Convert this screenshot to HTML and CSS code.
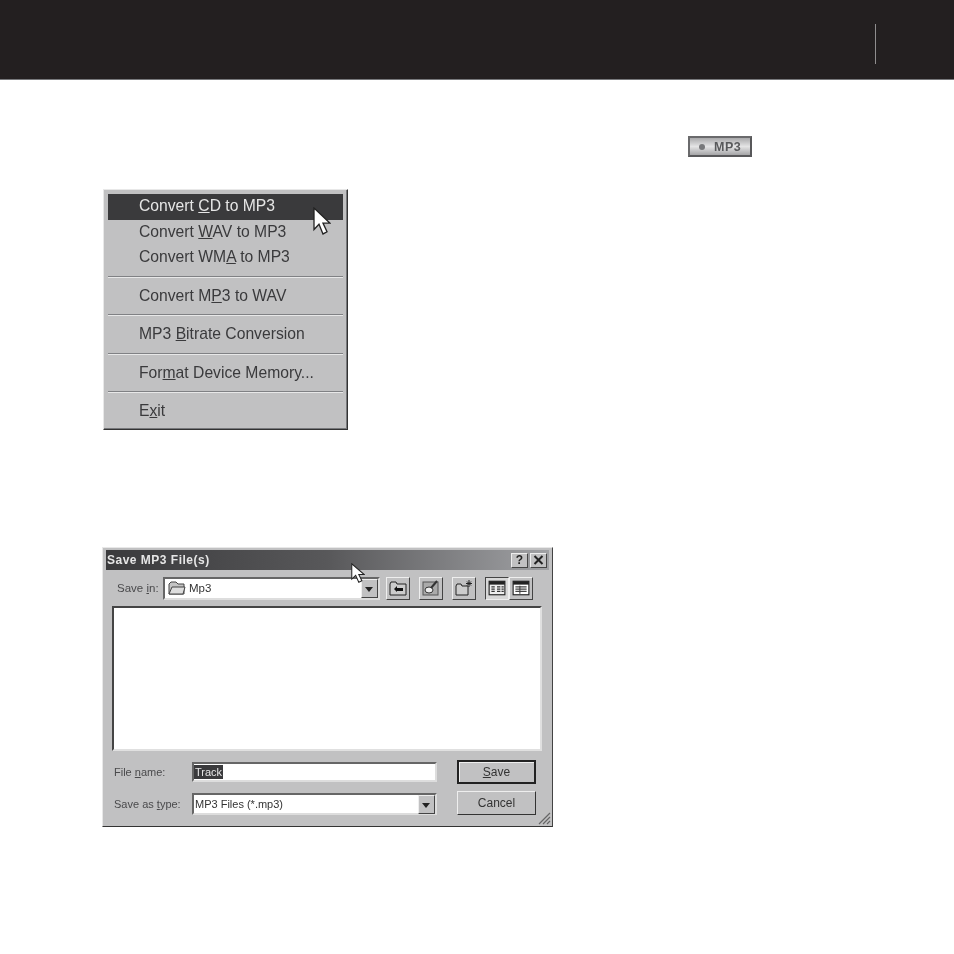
FILE: index.html
```html
<!DOCTYPE html>
<html lang="en">
<head>
<meta charset="utf-8">
<title>MP3 conversion</title>
<link rel="stylesheet" href="styles.css">
</head>
<body>
<header class="banner"><span class="banner-rule"></span></header>
<main class="page">
  <div class="badge-row">
    <div class="mp3-badge"><span class="led"></span><span>MP3</span></div>
  </div>

  <div class="menu">
    <div class="menu-item active">Convert <u>C</u>D to MP3</div>
    <div class="menu-item">Convert <u>W</u>AV to MP3</div>
    <div class="menu-item">Convert WM<u>A</u> to MP3</div>
    <div class="menu-sep"></div>
    <div class="menu-item">Convert M<u>P</u>3 to WAV</div>
    <div class="menu-sep"></div>
    <div class="menu-item">MP3 <u>B</u>itrate Conversion</div>
    <div class="menu-sep"></div>
    <div class="menu-item">For<u>m</u>at Device Memory...</div>
    <div class="menu-sep"></div>
    <div class="menu-item">E<u>x</u>it</div>
    <svg class="cursor menu-cursor" viewBox="0 0 18 26" preserveAspectRatio="none"><path d="M1 1v20l5-5 4 9 4-2-4-8h7z" fill="#fff" stroke="#222" stroke-width="1.3"/></svg>
  </div>

  <div class="dialog">
    <div class="titlebar">
      <span class="title">Save MP3 File(s)</span>
      <span class="cap-btn">?</span>
      <span class="cap-btn close"><svg viewBox="0 0 11 10"><path d="M1.500 1l8 8M9.500 1l-8 8" stroke="#222" stroke-width="2"/></svg></span>
    </div>
    <div class="toolbar">
      <span class="label savein">Save <u>i</u>n:</span>
      <div class="combo folder-combo">
        <svg class="folder" viewBox="0 0 18 14"><path d="M1 3l2-2h5l2 2h6v10H1z" fill="#c4c4c4" stroke="#444"/><path d="M1 13l3-7h13l-2 7z" fill="#ddd" stroke="#444"/></svg>
        <span>Mp3</span>
        <span class="drop"></span>
      </div>
      <span class="tool"><svg viewBox="0 0 18 16"><path d="M1 4l1-2h5l1 2h9v11H1z" fill="#ccc" stroke="#222"/><path d="M5 9l3-3v2h6v3H8v1z" fill="#111"/></svg></span>
      <span class="tool"><svg viewBox="0 0 18 16"><rect x="1" y="2" width="15" height="13" fill="#aaa" stroke="#555"/><ellipse cx="7" cy="10" rx="4" ry="3" fill="#eee" stroke="#333"/><path d="M9 8l6-7" stroke="#333" stroke-width="2"/></svg></span>
      <span class="tool"><svg viewBox="0 0 18 16"><path d="M1 6l1-2h4l1 2h6v9H1z" fill="#ccc" stroke="#222"/><path d="M14 0v7M11 3.500h6M12 1.500l4 4M16 1.500l-4 4" stroke="#222"/></svg></span>
      <div class="view-group">
        <span class="tool pressed"><svg viewBox="0 0 16 14"><rect x="1" y="1" width="14" height="12" fill="#eee" stroke="#222"/><rect x="1" y="1" width="14" height="3" fill="#222"/><path d="M3 6h3M3 8h3M3 10h3M8 6h3M8 8h3M8 10h3M12 6h2M12 8h2M12 10h2" stroke="#333"/></svg></span>
        <span class="tool"><svg viewBox="0 0 16 14"><rect x="1" y="1" width="14" height="12" fill="#fff" stroke="#222"/><rect x="1" y="1" width="14" height="3" fill="#222"/><path d="M3 6h10M3 8h10M3 10h10M7 5v7" stroke="#444"/></svg></span>
      </div>
    </div>
    <div class="file-list"></div>
    <div class="form">
      <div class="fields">
        <div class="field">
          <span class="label">File <u>n</u>ame:</span>
          <div class="combo name-input"><span class="selected">Track</span></div>
        </div>
        <div class="field">
          <span class="label">Save as <u>t</u>ype:</span>
          <div class="combo type-select"><span>MP3 Files (*.mp3)</span><span class="drop"></span></div>
        </div>
      </div>
      <div class="buttons">
        <span class="button default"><span><u>S</u>ave</span></span>
        <span class="button">Cancel</span>
      </div>
    </div>
    <svg class="grip" viewBox="0 0 14 14"><path d="M13 2L2 13M13 6l-7 7M13 10l-3 3" stroke="#666" stroke-width="1.200"/></svg>
    <svg class="cursor dialog-cursor" viewBox="0 0 18 26" preserveAspectRatio="none"><path d="M1 1v20l5-5 4 9 4-2-4-8h7z" fill="#fff" stroke="#222" stroke-width="1.300"/></svg>
  </div>
</main>
</body>
</html>
```
FILE: styles.css
```css
* { box-sizing: border-box; }
html, body { margin: 0; padding: 0; background: #fff; }
body { width: 954px; height: 954px; overflow: hidden; font-family: "Liberation Sans", Arial, sans-serif; color: #333; }

.banner { height: 80px; background: #231f20; border-bottom: 1px solid #77787b; display: flex; justify-content: flex-end; padding-right: 78px; }
.banner-rule { width: 1px; height: 40px; margin-top: 24px; background: #8f8d8e; }

.page { display: flex; flex-direction: column; }

.badge-row { display: flex; justify-content: flex-end; padding: 56px 202px 0 0; }
.mp3-badge { width: 64px; height: 21px; display: flex; align-items: center; gap: 9px; padding-left: 9px; font-size: 12.500px; font-weight: 700; letter-spacing: .5px; color: #58595b; border: 2px solid; border-color: #6a6a6c #58585a #58585a #6a6a6c; background: linear-gradient(#a9a9ab, #e4e4e5 50%, #a5a5a7); filter: blur(.5px); }
.led { width: 6px; height: 6px; border-radius: 50%; background: #77787b; }

.menu { position: relative; width: 245px; height: 241px; margin: 32px 0 0 103px; padding: 4px 4px 0 4px; background: #c1c1c2; border: 1px solid; border-color: #e8e8e8 #333 #333 #e8e8e8; box-shadow: inset -1px -1px 0 #77787b; filter: blur(.4px); }
.menu-item { height: 25.500px; padding-left: 31px; font-size: 15.700px; line-height: 24px; color: #3a3a3c; white-space: nowrap; }
.menu-item.active { background: #3a3a3c; color: #e6e6e6; }
.menu-sep { height: 2px; margin: 5px 0 6px; background: #e8e8e8; border-top: 1px solid #808184; }
.cursor { position: absolute; }
.menu-cursor { left: 209px; top: 17px; width: 18px; height: 28px; }

.dialog { position: relative; width: 451px; height: 280px; margin: 117px 0 0 102px; padding: 2px 3px 3px; background: #c1c1c2; border: 1px solid; border-color: #e8e8e8 #444 #333 #e8e8e8; filter: blur(.4px); }
.titlebar { display: flex; align-items: center; gap: 2px; height: 20px; padding: 0 2px 0 1px; background: linear-gradient(90deg, #3a3a3c, #58585a 50%, #a0a1a4); }
.title { flex: 1; font-size: 12px; font-weight: 700; letter-spacing: .5px; color: #e6e6e6; }
.cap-btn { width: 17px; height: 15px; display: flex; align-items: center; justify-content: center; font-size: 12px; font-weight: 700; color: #222; background: #c1c1c2; border: 1px solid; border-color: #eee #444 #444 #eee; }
.close svg { width: 11px; height: 10px; }

.toolbar { display: flex; align-items: center; height: 24px; margin-top: 6px; padding-left: 11px; }
.label { font-size: 11px; color: #4a4a4c; white-space: nowrap; }
.savein { width: 46px; font-size: 11.500px; }
.combo { display: flex; align-items: center; background: #fff; font-size: 11px; color: #333; border: 2px solid; border-color: #666 #ddd #ddd #666; }
.folder-combo { width: 217px; height: 23px; gap: 3px; padding-left: 3px; margin-right: 6px; font-size: 11.500px; }
.folder { width: 18px; height: 14px; }
.folder-combo > span:nth-child(2) { flex: 1; }
.drop { position: relative; width: 17px; height: 19px; margin-left: auto; background: #c1c1c2; border: 1px solid; border-color: #eee #444 #444 #eee; }
.drop::after { content: ""; position: absolute; left: 3px; top: 7px; border: 4px solid transparent; border-top: 5px solid #222; border-bottom: 0; }
.tool { width: 24px; height: 23px; display: flex; align-items: center; justify-content: center; margin-right: 9px; background: #c1c1c2; border: 1px solid; border-color: #eee #444 #444 #eee; }
.tool svg { width: 18px; height: 16px; }
.view-group { display: flex; }
.view-group .tool { margin: 0; }
.pressed { border-color: #444 #eee #eee #444; background: #d8d8d8; }

.file-list { width: 430px; height: 145px; margin: 6px 0 0 6px; background: #fff; border: 2px solid; border-color: #444 #e0e0e0 #e0e0e0 #444; }

.form { display: flex; margin: 10px 0 0 8px; }
.fields { display: flex; flex-direction: column; gap: 11px; padding-top: 1px; }
.field { display: flex; align-items: center; }
.field .label { width: 78px; }
.name-input { width: 245px; height: 20px; }
.type-select { width: 245px; height: 22px; padding-left: 1px; }
.selected { background: #3a3a3c; color: #e6e6e6; padding: 0 1px; line-height: 14px; }
.buttons { display: flex; flex-direction: column; gap: 7px; margin: -1px 0 0 20px; }
.button { width: 79px; height: 24px; display: flex; align-items: center; justify-content: center; font-size: 12px; color: #333; background: #c1c1c2; border: 1px solid; border-color: #eee #333 #333 #eee; }
.button.default { border: 2px solid #222; box-shadow: inset 1px 1px 0 #eee; }

.grip { position: absolute; right: 1px; bottom: 1px; width: 14px; height: 14px; }
.dialog-cursor { left: 248px; top: 15px; width: 14px; height: 20px; }
```
